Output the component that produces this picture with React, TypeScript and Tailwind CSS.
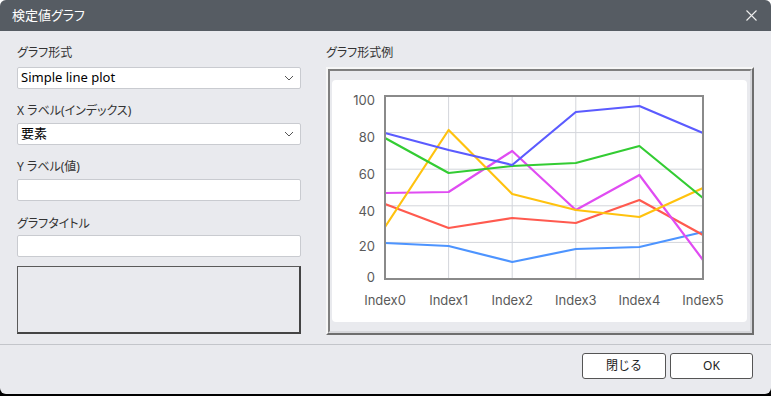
import React from 'react';

const jp = { fontFamily: '"Noto Sans", "Noto Sans CJK JP", sans-serif' };

const GRID_X = [53, 116.6, 180.2, 243.8, 307.4, 371];
const GRID_Y = [16, 52.6, 89.2, 125.8, 162.4, 199];

const SERIES: { color: string; ys: number[] }[] = [
  { color: '#4d94ff', ys: [163, 166, 182, 169, 167, 152] },
  { color: '#ff5a4f', ys: [124, 148, 138, 143, 120, 155] },
  { color: '#e04cf2', ys: [113, 112, 71, 130, 95, 180] },
  { color: '#ffc20e', ys: [147, 50, 114, 130, 137, 108] },
  { color: '#33cc33', ys: [58, 93, 86, 83, 66, 118] },
  { color: '#5b5bff', ys: [53, 70, 85, 32, 26, 53] },
];

const Y_LABELS = [
  { t: '100', y: 21 },
  { t: '80', y: 58 },
  { t: '60', y: 95 },
  { t: '40', y: 132 },
  { t: '20', y: 167 },
  { t: '0', y: 198 },
];

const Label = ({ children, className = '' }: { children: React.ReactNode; className?: string }) => (
  <div className={`h-4 text-[12px] leading-[20px] text-[#333] [font-feature-settings:'palt'] ${className}`}>{children}</div>
);

const Select = ({ value, className = '' }: { value: string; className?: string }) => (
  <div className={`flex h-[22px] items-center justify-between rounded-[2px] border border-[#c9cbd0] bg-white pl-[3px] pr-[6px] ${className}`}>
    <span className="text-[13px] text-black">{value}</span>
    <svg width="10" height="6" viewBox="0 0 10 6" fill="none" stroke="#555" strokeWidth="1">
      <path d="M1 1l4 4 4-4" />
    </svg>
  </div>
);

const Input = ({ className = '' }: { className?: string }) => (
  <div className={`h-[22px] rounded-[2px] border border-[#c9cbd0] bg-white ${className}`} />
);

const Chart = () => (
  <svg width="415" height="242" viewBox="0 0 415 242" className="block">
    {GRID_X.slice(1, 5).map((x) => (
      <line key={x} x1={x} y1={16} x2={x} y2={199} stroke="#d3d5db" strokeWidth="1" />
    ))}
    {GRID_Y.slice(1, 5).map((y) => (
      <line key={y} x1={53} y1={y} x2={371} y2={y} stroke="#d3d5db" strokeWidth="1" />
    ))}
    {SERIES.map((s) => (
      <polyline
        key={s.color}
        points={s.ys.map((y, i) => `${GRID_X[i]},${y}`).join(' ')}
        fill="none"
        stroke={s.color}
        strokeWidth="2.2"
        strokeLinejoin="round"
      />
    ))}
    <rect x={53} y={16} width={318} height={183} fill="none" stroke="#8a8a8a" strokeWidth="2" />
    <g fontFamily="Inter, sans-serif" fontSize="13" fill="#5a5a5a">
      {Y_LABELS.map((l) => (
        <text key={l.t} x={43} y={l.y} textAnchor="end" dominantBaseline="middle">
          {l.t}
        </text>
      ))}
      {GRID_X.map((x, i) => (
        <text key={x} x={x} y={221} textAnchor="middle" dominantBaseline="middle">
          {`Index${i}`}
        </text>
      ))}
    </g>
  </svg>
);

export default function App() {
  return (
    <div className="h-[396px] w-[771px] bg-[linear-gradient(to_bottom,white_50%,black_50%)]" style={jp}>
      <div className="flex h-[394px] flex-col overflow-hidden rounded-[6px] bg-[#e9eaee]">
        {/* title bar */}
        <div className="flex h-[31px] shrink-0 items-center justify-between bg-[#565c63] pl-[12px] pr-[14px]">
          <span className="text-[13px] text-white [font-feature-settings:'palt']">検定値グラフ</span>
          <svg width="11" height="11" viewBox="0 0 11 11" stroke="#eee" strokeWidth="1.1">
            <path d="M0.5 0.5l10 10M10.5 0.5l-10 10" />
          </svg>
        </div>

        {/* content */}
        <div className="flex h-[313px] shrink-0 gap-[25px] px-[17px] pt-[12px]">
          <div className="flex w-[284px] flex-col">
            <Label>グラフ形式</Label>
            <Select value="Simple line plot" className="mt-[8px]" />
            <Label className="mt-[12px]">X ラベル(インデックス)</Label>
            <Select value="要素" className="mt-[6px]" />
            <Label className="mt-[12px]">Y ラベル(値)</Label>
            <Input className="mt-[6px]" />
            <Label className="mt-[13px]">グラフタイトル</Label>
            <Input className="mt-[5px]" />
            <div className="mt-[9px] h-[68px] border-t border-l border-r-2 border-b-2 border-t-[#5a5a5a] border-l-[#5a5a5a] border-r-[#444] border-b-[#444]" />
          </div>

          <div className="flex w-[428px] flex-col">
            <Label>グラフ形式例</Label>
            <div className="mt-[8px] h-[268px] border-2 border-t-[#f7f7f7] border-l-[#f7f7f7] border-r-[#6e6e6e] border-b-[#6e6e6e]">
              <div className="h-full border-2 border-t-[#7f7f7f] border-l-[#7f7f7f] border-r-[#d6d7db] border-b-[#d6d7db] pb-[9px] pl-[2px] pr-[2px] pt-[9px]">
                <div className="h-[242px] w-[415px] rounded-[4px] bg-white">
                  <Chart />
                </div>
              </div>
            </div>
          </div>
        </div>

        {/* footer */}
        <div className="flex flex-1 justify-end gap-[4px] border-t border-[#c3c5ca] pr-[18px] pt-[8px]">
          <button className="h-[26px] w-[84px] rounded-[3px] border border-[#555] bg-white text-[12px] text-[#222]">閉じる</button>
          <button className="h-[26px] w-[83px] rounded-[3px] border border-[#555] bg-white text-[12px] text-[#222]">OK</button>
        </div>
      </div>
    </div>
  );
}
